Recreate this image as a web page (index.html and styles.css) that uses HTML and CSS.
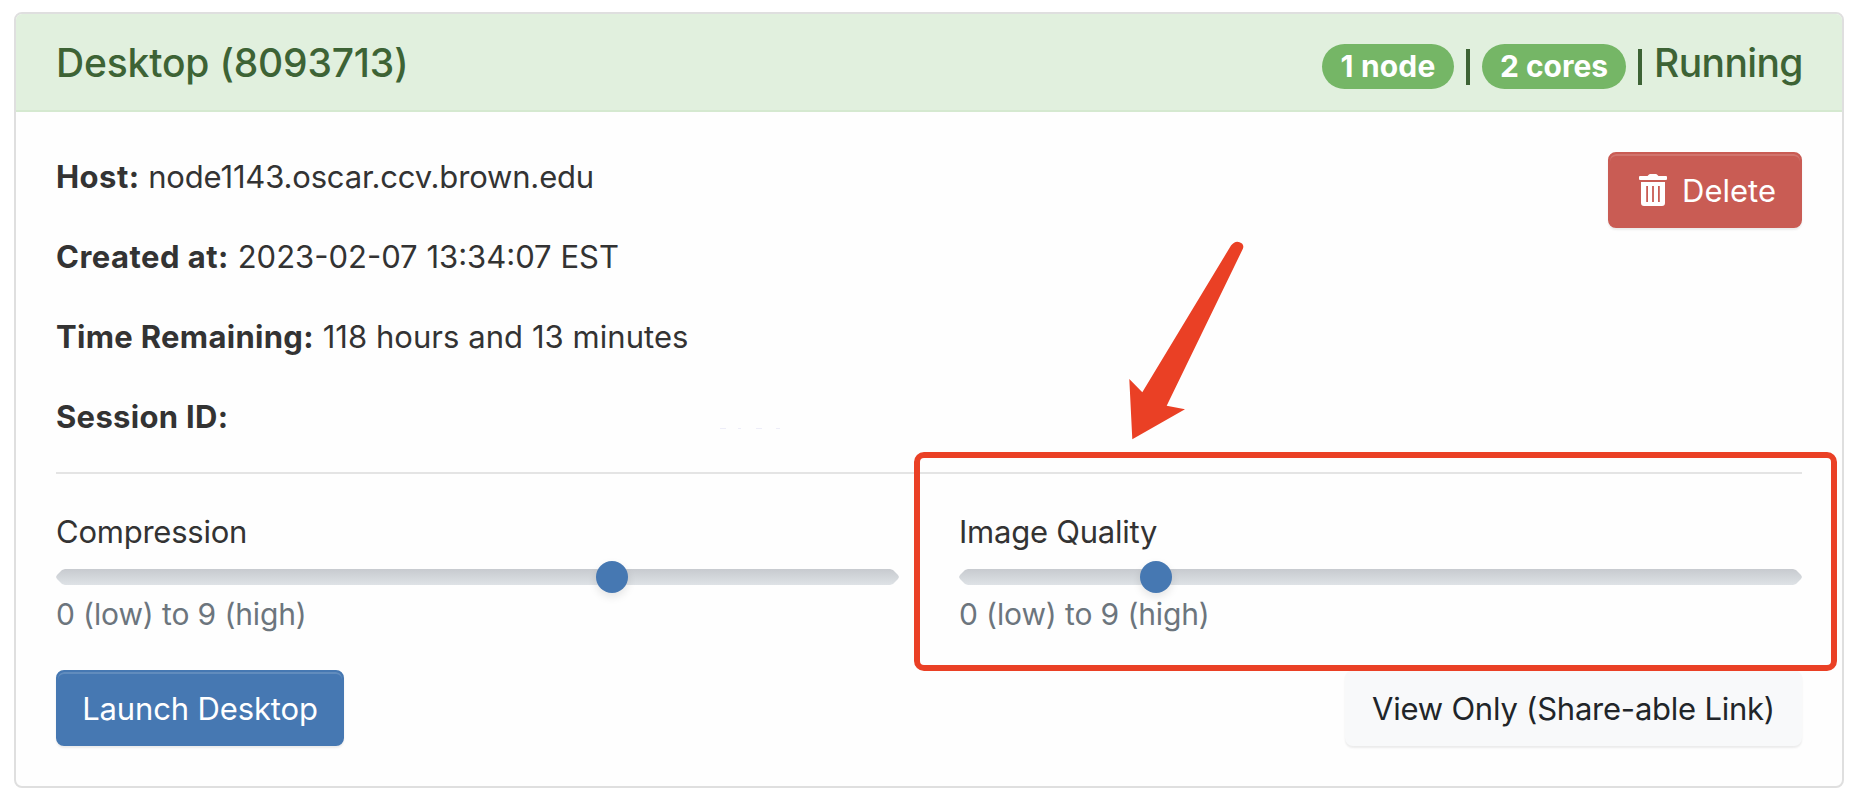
FILE: index.html
```
<!DOCTYPE html>
<html lang="en">
<head>
  <meta charset="utf-8">
  <title>Desktop session</title>
  <link rel="stylesheet" href="styles.css">
</head>
<body>
<article class="card">
  <header class="card-header">
    <h2 class="title">Desktop (8093713)</h2>
    <div class="status">
      <span class="badge badge-node">1 node</span>
      <span class="pipe"></span>
      <span class="badge badge-cores">2 cores</span>
      <span class="pipe"></span>
      <span class="state">Running</span>
    </div>
  </header>
  <div class="card-body">
    <div class="summary">
      <div class="details">
        <p><strong class="host">Host:</strong> <span class="host-value">node1143.oscar.ccv.brown.edu</span></p>
        <p><strong class="created">Created at:</strong> <span>2023-02-07 13:34:07 EST</span></p>
        <p><strong>Time Remaining:</strong> <span class="time-value">118 hours and 13 minutes</span></p>
        <p><strong>Session ID:</strong></p>
      </div>
      <button class="btn btn-danger">
        <svg class="trash" viewBox="0 0 28 32"><path fill="#fff" fill-rule="evenodd" d="M1 2H8.500L10 .5Q10.500 0 11 0H17Q17.500 0 18 .5L19.500 2H27Q28 2 28 3V5Q28 6 27 6H1Q0 6 0 5V3Q0 2 1 2ZM2 8H26V29Q26 32 23 32H5Q2 32 2 29ZM7.200 12V28H9V12ZM13.100 12V28H14.900V12ZM19 12V28H20.800V12Z"/></svg>
        <span>Delete</span>
      </button>
    </div>
    <hr>
    <div class="settings">
      <div class="field">
        <label>Compression</label>
        <div class="slider"><input class="range" type="range" min="0" max="9" step="any" value="5.992"></div>
        <small>0 (low) to 9 (high)</small>
      </div>
      <div class="field">
        <label>Image Quality</label>
        <div class="slider"><input class="range" type="range" min="0" max="9" step="any" value="2.01"></div>
        <small>0 (low) to 9 (high)</small>
      </div>
    </div>
    <div class="actions">
      <button class="btn btn-primary"><span>Launch Desktop</span></button>
      <button class="btn btn-light"><span>View Only (Share-able Link)</span></button>
    </div>
  </div>
</article>
<div class="highlight"></div>
<svg class="arrow" viewBox="0 0 120 204"><path fill="#ea4025" d="M9.300 202.300 6.300 142 19.300 155.300 108 8.500Q113 2 119 6.500 121 8.500 120 11.500L43.700 168.700 62 172.300Z"/></svg>
<svg class="specks" viewBox="0 0 62 2"><path fill="#ededf8" d="M0 0H6V1H0ZM18 0H21V1H18ZM36 0H42V1H36ZM56 0H60V1H56Z"/></svg>
</body>
</html>
```
FILE: styles.css
```
* { box-sizing: border-box; }
body { margin: 0; padding: 12px 10px 20px 14px; height: 808px; background: #fff; color: #333; font: 31px/50px Inter, sans-serif; overflow: hidden; }

.card { height: 776px; border: 2px solid #dfdfdf; border-radius: 8px; background: #fefefe; overflow: hidden; }
.card-header { height: 98px; padding: 0 40px; display: flex; justify-content: space-between; align-items: center; background: #e1f0de; border-bottom: 2px solid #d5e9d0; color: #3d6335; font-weight: 500; font-size: 39px; }
.title { margin: 2px 0 0; font: inherit; letter-spacing: -.17px; }
.status { display: flex; align-items: center; white-space: nowrap; }
.badge { height: 45px; margin-top: 9px; border-radius: 23px; background: #75b666; color: #fff; font-size: 30px; line-height: 45px; font-weight: 700; text-align: center; }
.badge-node { width: 132px; letter-spacing: .2px; }
.badge-cores { width: 144px; }
.pipe { width: 4px; height: 36px; margin: 10px 12px 0; background: currentColor; }
.state { width: 148px; margin-top: 2px; padding-right: 1px; text-align: right; letter-spacing: -.6px; }

.card-body { padding: 40px; }
.summary { display: flex; justify-content: space-between; align-items: flex-start; }
.details { display: grid; gap: 30px; }
p { margin: 0; white-space: nowrap; }
strong { letter-spacing: .31px; }
.host { letter-spacing: .45px; }
.created { letter-spacing: .48px; }
.host-value { letter-spacing: -.17px; }
.time-value { letter-spacing: .05px; }
hr { margin: 30px 0 32px; border: 0; border-top: 2px solid #e4e4e4; }

.settings { display: grid; grid-template-columns: 1fr 1fr; gap: 60px; }
.field { display: flex; flex-direction: column; }
.field label { padding-top: 1px; letter-spacing: -.24px; }
.slider { display: grid; align-items: center; margin: 4px 0 1px; }
.slider::before { content: ""; grid-area: 1 / 1; height: 16px; background: linear-gradient(#c7cacf, #dee2e6); clip-path: polygon(0 8px, 1px 6px, 6px 1px, 9px 0, calc(100% - 9px) 0, calc(100% - 6px) 1px, calc(100% - 1px) 6px, 100% 8px, calc(100% - 1px) 10px, calc(100% - 6px) 15px, calc(100% - 9px) 100%, 9px 100%, 6px 15px, 1px 10px); }
.range { grid-area: 1 / 1; z-index: 1; -webkit-appearance: none; appearance: none; width: 100%; height: 32px; margin: 0; background: transparent; }
.range::-webkit-slider-thumb { -webkit-appearance: none; width: 32px; height: 32px; border-radius: 50%; background: #4678b2; box-shadow: 0 4px 8px rgba(0,0,0,.1); }
small { font-size: 30px; color: #6c757d; line-height: 40px; letter-spacing: -.12px; }

.actions { display: flex; justify-content: space-between; margin-top: 36px; }
.btn { height: 76px; padding: 0; border: 2px solid; border-radius: 8px; font: 31px/48px Inter, sans-serif; white-space: nowrap; box-shadow: inset 0 2px 0 rgba(255,255,255,.15), 0 2px 2px rgba(0,0,0,.075); display: flex; align-items: center; justify-content: center; }
.btn span { padding-top: 2px; }
.btn-danger { width: 194px; padding-left: 5px; background: #c95c54; border-color: #c95c54; color: #fff; gap: 15px; }
.btn-primary { width: 288px; background: #4678b2; border-color: #4678b2; color: #fff; letter-spacing: -.14px; }
.btn-light { width: 457px; background: #f8f9fa; border-color: #f8f9fa; color: #212529; letter-spacing: -.23px; }
.trash { width: 28px; height: 32px; }

.highlight { position: absolute; left: 914px; top: 452px; width: 923px; height: 219px; border: 6px solid #ea4025; border-radius: 10px; }
.arrow { position: absolute; left: 1123px; top: 237px; width: 120px; height: 204px; overflow: visible; }
.specks { position: absolute; left: 720px; top: 428px; width: 62px; height: 2px; }
```
